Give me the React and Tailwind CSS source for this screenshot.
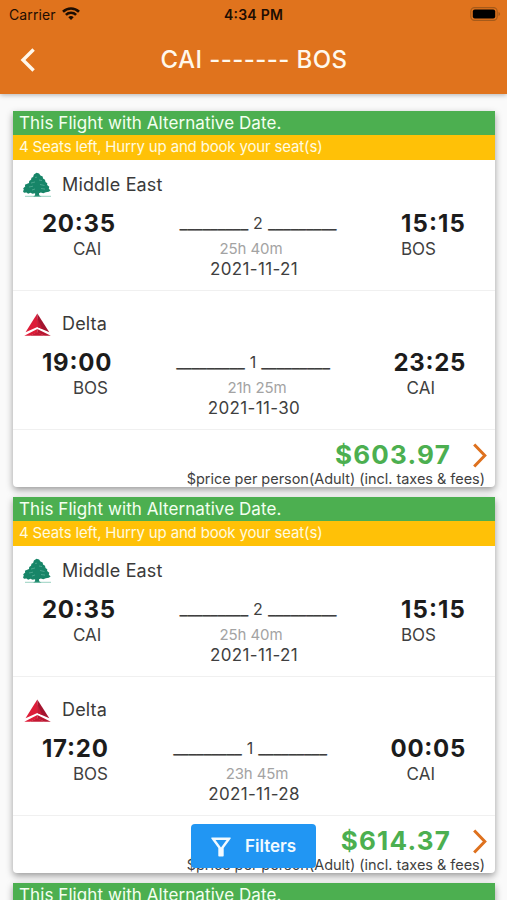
const flights = [
  {
    price: '$603.97',
    legs: [
      { airline: 'Middle East', logo: 'cedar', dep: '20:35', from: 'CAI', arr: '15:15', to: 'BOS', stops: '2', duration: '25h 40m', date: '2021-11-21', pad: 'h-[131px] pt-[10px]', arrTrack: 'tracking-[1.1px]', stopsAt: 'ml-[8px]', durAt: '-ml-[6px]', toAt: 'pr-[30px]' },
      { airline: 'Delta', logo: 'delta', dep: '19:00', from: 'BOS', arr: '23:25', to: 'CAI', stops: '1', duration: '21h 25m', date: '2021-11-30', pad: 'h-[139px] pt-[18px]', arrTrack: 'tracking-[0.7px]', stopsAt: '-ml-[2px]', durAt: 'ml-[6px]', toAt: 'pr-[31px]' },
    ],
  },
  {
    price: '$614.37',
    legs: [
      { airline: 'Middle East', logo: 'cedar', dep: '20:35', from: 'CAI', arr: '15:15', to: 'BOS', stops: '2', duration: '25h 40m', date: '2021-11-21', pad: 'h-[131px] pt-[10px]', arrTrack: 'tracking-[1.1px]', stopsAt: 'ml-[8px]', durAt: '-ml-[6px]', toAt: 'pr-[30px]' },
      { airline: 'Delta', logo: 'delta', dep: '17:20', from: 'BOS', arr: '00:05', to: 'CAI', stops: '1', duration: '23h 45m', date: '2021-11-28', pad: 'h-[139px] pt-[18px]', arrTrack: 'tracking-[0.7px]', stopsAt: '-ml-[8px]', durAt: 'ml-[6px]', toAt: 'pr-[31px]' },
    ],
  },
  { price: '$614.37', legs: [] },
];

function Cedar() {
  return (
    <svg className="h-[26px] w-[30px]" viewBox="0 0 30 26">
      <path fill="#178568" d="M14.500.8l2.600.8 1.300 2 2.300 1 .3 2 2 1.200.5 2.200 1.800 1.300-.2 1.800 2.200 1.700-.5 2 1.800 1.700-1.800 1.300-3 .4-2.500 1-2.500-.7-1.800.8.2 2 2.300 1.500h-8.400l2-1.500v-2l-2.600.4-2-.9-2.400.9-1.600-1.200-2.500.3-1-1.500.8-1.600-.6-1.400 2-1.800-.3-1.700L7 11l.2-2 1.800-1.200.5-2 1.600-.9.800-2.300z" />
      <path stroke="#7cc4b0" strokeWidth=".5" fill="none" d="M9 11l4-1M17 8l3 .6M7 15l4-.8M18 12.500l4.500 1M10 18l3-1M19 16.500l4 .6M13 5.500l2-.3" />
      <path stroke="#7fc5b1" strokeWidth=".8" d="M3 24.300h26" />
    </svg>
  );
}

function Delta() {
  return (
    <svg className="h-[26px] w-[30px]" viewBox="0 0 30 26">
      <path fill="#dd1c38" d="M15.300 2.500V16L3.500 21.200z" />
      <path fill="#a4142f" d="M15.300 2.500V16l12 5.200z" />
      <path fill="#c91833" d="M15.300 7v9l5 2z" />
      <path fill="#dd1c38" d="M15.300 18v3.500L8 24.800H2.300z" />
      <path fill="#b81631" d="M15.300 18v3.500l7.300 3.300h6.200z" />
      <path fill="#c41833" d="M15.300 21L8 24.800h14.600z" />
    </svg>
  );
}

function Chevron() {
  return (
    <svg className="mt-[13px] h-[25px] w-[15px]" viewBox="0 0 15 25" fill="none" stroke="#de711e" strokeWidth="3">
      <path d="M2.200 1.500l10.600 11L2.200 23.500" />
    </svg>
  );
}

function Leg({ leg }) {
  return (
    <div className={`flex flex-col border-b border-[#f0f0f0] ${leg.pad}`}>
      <div className="flex h-[30px] items-center pl-[9px]">
        {leg.logo === 'cedar' ? <Cedar /> : <Delta />}
        <span className="ml-[10px] text-[18px] leading-[30px] tracking-[0.15px] text-[#3a3a3a]">{leg.airline}</span>
      </div>
      <div className="mt-[9px] flex justify-between">
        <div className="flex w-[110px] flex-col pl-[29px]">
          <span className="text-[24px] leading-[30px] font-bold tracking-[0.75px] text-[#1c1c1c] [font-feature-settings:'calt'_1]">{leg.dep}</span>
          <span className="pl-[31px] text-[17px] leading-5 text-[#3f3f3f]">{leg.from}</span>
        </div>
        <div className="flex w-[200px] flex-col items-center whitespace-nowrap text-[#3f3f3f]">
          <span className={`flex gap-[5px] text-[16px] leading-[29px] ${leg.stopsAt}`}>
            <span className="text-[17px] font-medium tracking-[-0.25px]">_________</span>
            <span>{leg.stops}</span>
            <span className="text-[17px] font-medium tracking-[-0.25px]">_________</span>
          </span>
          <span className={`text-[15px] leading-[21px] tracking-[-0.1px] text-[#a3a3a3] ${leg.durAt}`}>{leg.duration}</span>
          <span className="text-[17px] leading-5 tracking-[0.35px]">{leg.date}</span>
        </div>
        <div className="flex w-[110px] flex-col items-end pr-[29px]">
          <span className={`text-[24px] leading-[30px] font-bold text-[#1c1c1c] [font-feature-settings:'calt'_1] ${leg.arrTrack}`}>{leg.arr}</span>
          <span className={`text-[17px] leading-5 text-[#3f3f3f] ${leg.toAt}`}>{leg.to}</span>
        </div>
      </div>
    </div>
  );
}

function FlightCard({ flight }) {
  return (
    <article className="h-[376px] shrink-0 rounded-b-[4px] bg-white shadow-[0_3px_7px_rgba(0,0,0,0.38)]">
      <div className="h-6 bg-[#4caf50] pl-[6px] text-[17px] leading-[25px] tracking-[0.08px] text-[#f4fff0]">This Flight with Alternative Date.</div>
      <div className="h-[25px] bg-[#ffc107] pl-[6px] text-[15px] leading-[23px] tracking-[-0.16px] text-[#fffbe0]">4 Seats left, Hurry up and book your seat(s)</div>
      {flight.legs.map((leg) => (
        <Leg key={leg.airline} leg={leg} />
      ))}
      <div className="flex h-10 justify-end pr-2">
        <span className="mr-[21px] pt-[9px] text-[26px] leading-[32px] font-bold tracking-[1.2px] text-[#4caf50]">{flight.price}</span>
        <Chevron />
      </div>
      <div className="pr-[10px] text-right text-[14.500px] leading-[17px] tracking-[-0.03px] text-[#3f3f3f]">$price per person(Adult) (incl. taxes &amp; fees)</div>
    </article>
  );
}

export default function App() {
  return (
    <div className="relative flex h-[900px] w-[507px] flex-col overflow-hidden bg-[#fafafa] font-['Inter',sans-serif] [font-feature-settings:'calt'_0]">
      <header className="z-10 h-[94px] shrink-0 bg-[#e0731d] shadow-[0_1px_5px_rgba(0,0,0,0.3)]">
        <div className="grid h-[28px] grid-cols-3 items-center text-[14px] text-[#1d0d02]">
          <div className="flex items-center gap-[6px] pl-[9px]">
            <span className="tracking-[0.1px]">Carrier</span>
            <svg className="h-[14px] w-[18px]" viewBox="0 0 18 14" fill="none" stroke="#1d0d02" strokeWidth="2.600">
              <path d="M1 4.700a11.500 11.500 0 0 1 16 0M3.900 7.900a7.300 7.300 0 0 1 10.200 0" />
              <path d="M9 13l-2.700-2.800a3.900 3.900 0 0 1 5.400 0z" fill="#1d0d02" stroke="none" />
            </svg>
          </div>
          <span className="text-center font-semibold tracking-[0.25px] [font-feature-settings:'calt'_1]">4:34 PM</span>
          <svg className="mr-[6px] h-[14px] w-[31px] justify-self-end" viewBox="0 0 31 14">
            <rect x=".8" y=".6" width="26.400" height="12.800" rx="3.800" fill="none" stroke="#a55a1a" strokeWidth="1.100" />
            <rect x="2.800" y="2.500" width="22.400" height="9" rx="2" fill="#000" />
            <path d="M28.500 5v4q1.600-.6 1.600-2T28.500 5z" fill="#a55a1a" />
          </svg>
        </div>
        <div className="flex h-[64px] items-center">
          <svg className="ml-5 h-[24px] w-[16px]" viewBox="0 0 16 24" fill="none" stroke="#fff8ec" strokeWidth="3.400">
            <path d="M13.600 1.500L3 12l10.600 10.500" />
          </svg>
          <h1 className="flex-1 pr-[35px] text-center text-[24px] font-medium tracking-[0.4px] text-[#fff8ec]">CAI ------- BOS</h1>
        </div>
      </header>
      <main className="flex flex-col gap-[10px] pt-[17px] pr-[12px] pl-[13px]">
        {flights.map((flight, i) => (
          <FlightCard key={i} flight={flight} />
        ))}
      </main>
      <button className="absolute top-[824px] left-[191px] flex h-[44px] w-[125px] items-center rounded-[4px] bg-[#2196f3] pt-px pl-[20px] text-[17px] font-semibold text-[#f2faff]">
        <svg className="mr-[14px] h-[20px] w-[20px]" viewBox="0 0 20 20" fill="#f2faff" fillRule="evenodd">
          <path d="M.8.500h18.400q.8 0 .5.900L12.700 11v7.700q0 .8-.8.800H8.100q-.8 0-.8-.8V11L.3 1.400Q0 .5.800.5zM4.500 2.900L10 10.400l5.500-7.500z" />
        </svg>
        Filters
      </button>
    </div>
  );
}
